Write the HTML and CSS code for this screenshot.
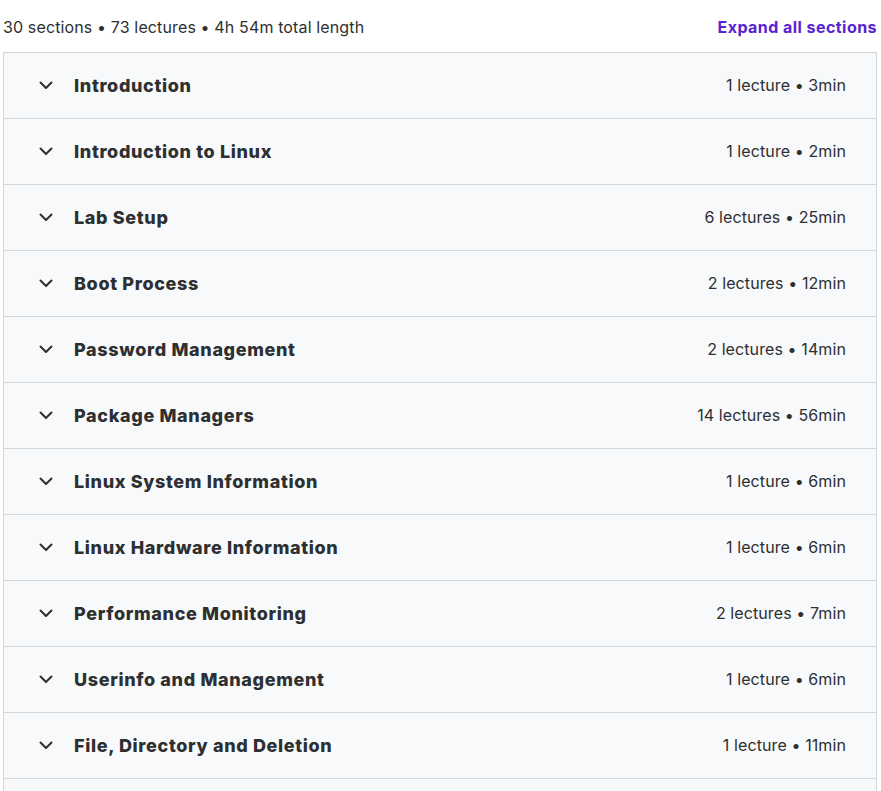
FILE: index.html
```html
<!DOCTYPE html>
<html>
<head>
<meta charset="utf-8">
<link rel="stylesheet" href="styles.css">
</head>
<body>
<div class="curriculum">
  <div class="summary">
    <span class="summary-text">30 sections • 73 lectures • 4h 54m total length</span>
    <button class="expand">Expand all sections</button>
  </div>
  <div class="sections">
    <div class="section"><span class="chev"><svg viewBox="0 0 24 24" width="24" height="24"><path d="M6.5 9.5l5.5 5.5 5.5-5.5" fill="none" stroke="currentColor" stroke-width="2" stroke-linecap="round" stroke-linejoin="round"/></svg></span><span class="title">Introduction</span><span class="meta">1 lecture • 3min</span></div>
    <div class="section"><span class="chev"><svg viewBox="0 0 24 24" width="24" height="24"><path d="M6.5 9.5l5.5 5.5 5.5-5.5" fill="none" stroke="currentColor" stroke-width="2" stroke-linecap="round" stroke-linejoin="round"/></svg></span><span class="title">Introduction to Linux</span><span class="meta">1 lecture • 2min</span></div>
    <div class="section"><span class="chev"><svg viewBox="0 0 24 24" width="24" height="24"><path d="M6.5 9.5l5.5 5.5 5.5-5.5" fill="none" stroke="currentColor" stroke-width="2" stroke-linecap="round" stroke-linejoin="round"/></svg></span><span class="title">Lab Setup</span><span class="meta">6 lectures • 25min</span></div>
    <div class="section"><span class="chev"><svg viewBox="0 0 24 24" width="24" height="24"><path d="M6.5 9.5l5.5 5.5 5.5-5.5" fill="none" stroke="currentColor" stroke-width="2" stroke-linecap="round" stroke-linejoin="round"/></svg></span><span class="title">Boot Process</span><span class="meta">2 lectures • 12min</span></div>
    <div class="section"><span class="chev"><svg viewBox="0 0 24 24" width="24" height="24"><path d="M6.5 9.5l5.5 5.5 5.5-5.5" fill="none" stroke="currentColor" stroke-width="2" stroke-linecap="round" stroke-linejoin="round"/></svg></span><span class="title">Password Management</span><span class="meta">2 lectures • 14min</span></div>
    <div class="section"><span class="chev"><svg viewBox="0 0 24 24" width="24" height="24"><path d="M6.5 9.5l5.5 5.5 5.5-5.5" fill="none" stroke="currentColor" stroke-width="2" stroke-linecap="round" stroke-linejoin="round"/></svg></span><span class="title">Package Managers</span><span class="meta">14 lectures • 56min</span></div>
    <div class="section"><span class="chev"><svg viewBox="0 0 24 24" width="24" height="24"><path d="M6.5 9.5l5.5 5.5 5.5-5.5" fill="none" stroke="currentColor" stroke-width="2" stroke-linecap="round" stroke-linejoin="round"/></svg></span><span class="title">Linux System Information</span><span class="meta">1 lecture • 6min</span></div>
    <div class="section"><span class="chev"><svg viewBox="0 0 24 24" width="24" height="24"><path d="M6.5 9.5l5.5 5.5 5.5-5.5" fill="none" stroke="currentColor" stroke-width="2" stroke-linecap="round" stroke-linejoin="round"/></svg></span><span class="title">Linux Hardware Information</span><span class="meta">1 lecture • 6min</span></div>
    <div class="section"><span class="chev"><svg viewBox="0 0 24 24" width="24" height="24"><path d="M6.5 9.5l5.5 5.5 5.5-5.5" fill="none" stroke="currentColor" stroke-width="2" stroke-linecap="round" stroke-linejoin="round"/></svg></span><span class="title">Performance Monitoring</span><span class="meta">2 lectures • 7min</span></div>
    <div class="section"><span class="chev"><svg viewBox="0 0 24 24" width="24" height="24"><path d="M6.5 9.5l5.5 5.5 5.5-5.5" fill="none" stroke="currentColor" stroke-width="2" stroke-linecap="round" stroke-linejoin="round"/></svg></span><span class="title">Userinfo and Management</span><span class="meta">1 lecture • 6min</span></div>
    <div class="section"><span class="chev"><svg viewBox="0 0 24 24" width="24" height="24"><path d="M6.5 9.5l5.5 5.5 5.5-5.5" fill="none" stroke="currentColor" stroke-width="2" stroke-linecap="round" stroke-linejoin="round"/></svg></span><span class="title">File, Directory and Deletion</span><span class="meta">1 lecture • 11min</span></div>
    <div class="section section-partial"></div>
  </div>
</div>
</body>
</html>
```

FILE: styles.css
```css
html, body {
  margin: 0;
  padding: 0;
  background: #ffffff;
}
body {
  font-family: "Inter", "Liberation Sans", sans-serif;
  color: #2d2f31;
  overflow: hidden;
  height: 791px;
}
.curriculum {
  padding: 0 4px 0 3px;
}
.summary {
  height: 52px;
  display: flex;
  align-items: center;
  justify-content: space-between;
  padding-top: 2px;
  box-sizing: border-box;
}
.summary-text {
  font-size: 16px;
  color: #2d2f31;
  letter-spacing: 0.13px;
}
.expand {
  background: none;
  border: 0;
  padding: 0;
  font-family: inherit;
  font-size: 16px;
  font-weight: 700;
  color: #5624d0;
  letter-spacing: 0.45px;
  cursor: pointer;
}
.sections {
  border: 1px solid #d1d7dc;
  border-bottom: 0;
}
.section {
  height: 65px;
  display: flex;
  align-items: center;
  background: #f7f9fa;
  border-bottom: 1px solid #d1d7dc;
  padding: 0 30px 0 30px;
}
.chev {
  width: 24px;
  height: 24px;
  display: flex;
  color: #2d2f31;
  margin-right: 16px;
  margin-top: -2px;
}
.title {
  flex: 1;
  font-size: 18px;
  font-weight: 800;
  letter-spacing: 0.65px;
}
.meta {
  font-size: 16px;
  color: #2d2f31;
  letter-spacing: 0.1px;
  margin-top: -1px;
}
```
